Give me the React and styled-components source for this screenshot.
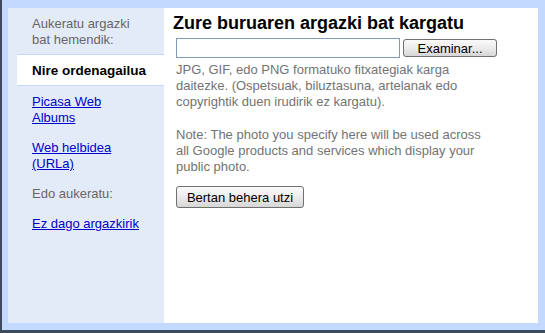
import React from "react";
import styled, { createGlobalStyle } from "styled-components";

const GlobalStyle = createGlobalStyle`
  html, body {
    margin: 0;
    padding: 0;
    background: #c3d9ff;
    font-family: "Liberation Sans", Arial, sans-serif;
  }
`;

const Frame = styled.div`
  box-sizing: border-box;
  width: 545px;
  height: 333px;
  background: #c3d9ff;
  border-left: 2px solid #3d4b5c;
  border-bottom: 3px solid #3d4b5c;
  padding: 8px 7px 7px 6px;
`;

const Panel = styled.div`
  display: flex;
  height: 315px;
`;

const Sidebar = styled.div`
  width: 156px;
  background: #e4ebf8;
  padding: 8px 0 0 9px;
  box-sizing: border-box;
  font-size: 13px;
  line-height: 16px;
`;

const SideLabel = styled.div`
  color: #666666;
  padding-left: 15px;
  margin-bottom: ${(p) => p.$gap || 0}px;
`;

const Selected = styled.div`
  background: #ffffff;
  border-top: 1px solid #c3d9ff;
  border-bottom: 1px solid #c3d9ff;
  margin-right: -1px;
  padding: 8px 0 6px 15px;
  font-weight: bold;
  font-size: 13.5px;
  color: #000000;
`;

const SideList = styled.div`
  display: flex;
  flex-direction: column;
  gap: 14px;
  margin-top: 8px;
`;

const SideLink = styled.a`
  color: #0000cc;
  text-decoration: underline;
  padding-left: 15px;
  cursor: pointer;
`;

const Main = styled.div`
  flex: 1;
  background: #ffffff;
  padding: 4px 0 0 9px;
  font-size: 13px;
  line-height: 16px;
`;

const Title = styled.h1`
  margin: 0;
  font-size: 18px;
  line-height: 22px;
  font-weight: bold;
  color: #000000;
`;

const UploadRow = styled.div`
  display: flex;
  align-items: center;
  gap: 3px;
  margin: 4px 0 4px 3px;
`;

const FileInput = styled.div`
  box-sizing: border-box;
  width: 224px;
  height: 20px;
  border: 1px solid #7f9db9;
  background: #ffffff;
`;

const Button = styled.button`
  box-sizing: border-box;
  width: ${(p) => p.$w}px;
  height: ${(p) => p.$h}px;
  padding: 0;
  border: 1px solid #707070;
  border-radius: 3px;
  background: linear-gradient(#fafafa, #ececec 50%, #d6d6d6);
  font-family: "Liberation Sans", Arial, sans-serif;
  font-size: 13px;
  color: #000000;
`;

const Info = styled.p`
  margin: 0 0 ${(p) => p.$gap || 0}px 3px;
  color: #737373;
`;

const Actions = styled.div`
  margin: 11px 0 0 3px;
`;

export default function App() {
  return (
    <>
      <GlobalStyle />
      <Frame>
        <Panel>
          <Sidebar>
            <SideLabel $gap={6}>
              Aukeratu argazki
              <br />
              bat hemendik:
            </SideLabel>
            <Selected>Nire ordenagailua</Selected>
            <SideList>
              <SideLink>
                Picasa Web
                <br />
                Albums
              </SideLink>
              <SideLink>
                Web helbidea
                <br />
                (URLa)
              </SideLink>
              <SideLabel>Edo aukeratu:</SideLabel>
              <SideLink>Ez dago argazkirik</SideLink>
            </SideList>
          </Sidebar>
          <Main>
            <Title>Zure buruaren argazki bat kargatu</Title>
            <UploadRow>
              <FileInput />
              <Button $w={94} $h={18}>Examinar...</Button>
            </UploadRow>
            <Info $gap={17}>
              JPG, GIF, edo PNG formatuko fitxategiak karga
              <br />
              daitezke. (Ospetsuak, biluztasuna, artelanak edo
              <br />
              copyrightik duen irudirik ez kargatu).
            </Info>
            <Info>
              Note: The photo you specify here will be used across
              <br />
              all Google products and services which display your
              <br />
              public photo.
            </Info>
            <Actions>
              <Button $w={128} $h={22}>Bertan behera utzi</Button>
            </Actions>
          </Main>
        </Panel>
      </Frame>
    </>
  );
}
